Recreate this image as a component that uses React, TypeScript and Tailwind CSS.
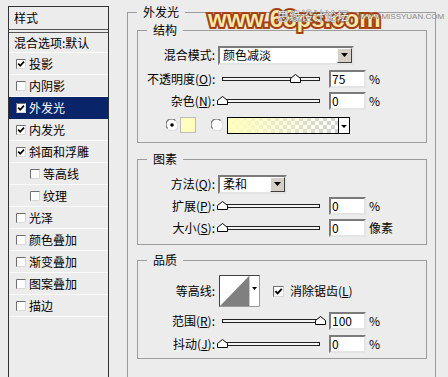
import type { ReactNode } from "react";

interface StyleItem {
  label: string;
  checked: boolean;
  indent?: boolean;
  selected?: boolean;
}

const STYLE_ITEMS: StyleItem[] = [
  { label: "投影", checked: true },
  { label: "内阴影", checked: false },
  { label: "外发光", checked: true, selected: true },
  { label: "内发光", checked: true },
  { label: "斜面和浮雕", checked: true },
  { label: "等高线", checked: false, indent: true },
  { label: "纹理", checked: false, indent: true },
  { label: "光泽", checked: false },
  { label: "颜色叠加", checked: false },
  { label: "渐变叠加", checked: false },
  { label: "图案叠加", checked: false },
  { label: "描边", checked: false },
];

function CheckBox({ checked, size = 10 }: { checked: boolean; size?: number }) {
  return (
    <svg width={size} height={size} viewBox="0 0 10 10" className="shrink-0">
      <rect x="0" y="0" width="10" height="10" fill="#fff" />
      <path d="M0.5 10V0.5H10" stroke="#6f6f6f" fill="none" />
      <path d="M9.5 0.5V9.5H0.5" stroke="#d8d8d8" fill="none" />
      {checked && (
        <path d="M2.2 4.6L4.2 6.8L8 2.6" stroke="#000" strokeWidth="1.7" fill="none" />
      )}
    </svg>
  );
}

function Radio({ on }: { on: boolean }) {
  return (
    <svg width="12" height="12" viewBox="0 0 12 12" className="shrink-0">
      <circle cx="6" cy="6" r="5.5" fill="#fff" />
      <path d="M1.6 9.5A5 5 0 0 1 9.5 1.6" stroke="#6f6f6f" strokeWidth="1.2" fill="none" />
      <path d="M10.4 2.5A5 5 0 0 1 2.5 10.4" stroke="#dcdcdc" strokeWidth="1.2" fill="none" />
      {on && <circle cx="6" cy="6" r="1.8" fill="#000" />}
    </svg>
  );
}

function Label({ children, w = "w-[68px]" }: { children: ReactNode; w?: string }) {
  return <span className={`${w} shrink-0 text-right whitespace-nowrap`}>{children}</span>;
}

function DropButton() {
  return (
    <span className="flex h-full w-[15px] items-center justify-center border border-t-white border-l-white border-r-[#404040] border-b-[#404040] bg-[#d4d0c8]">
      <svg width="7" height="4" viewBox="0 0 7 4">
        <path d="M0 0H7L3.5 4Z" fill="#000" />
      </svg>
    </span>
  );
}

function Select({ value, width }: { value: string; width: string }) {
  return (
    <div
      className={`${width} ml-[3px] flex h-[19px] items-center justify-between border-2 border-t-[#7b7b7b] border-l-[#7b7b7b] border-r-[#e4e4e4] border-b-[#e4e4e4] bg-white`}
    >
      <span className="pl-[3px] leading-none">{value}</span>
      <DropButton />
    </div>
  );
}

function Slider({ value }: { value: number }) {
  return (
    <div className="relative ml-[3px] flex h-[22px] w-[106px] shrink-0 items-center px-[4px]">
      <div className="h-[4px] w-full border border-[#222] bg-[#f4f4f4]" />
      <svg
        width="11"
        height="9"
        viewBox="0 0 11 9"
        className="absolute top-[6px]"
        style={{ left: 4 + value * 0.98 - 5.5 }}
      >
        <path d="M0.5 8.5V4.5L5.5 0.5L10.5 4.5V8.5Z" fill="#fff" stroke="#000" />
      </svg>
    </div>
  );
}

function NumberBox({ value }: { value: string }) {
  return (
    <div className="ml-[5px] flex h-[18px] w-[37px] shrink-0 items-center border-2 border-t-[#7b7b7b] border-l-[#7b7b7b] border-r-[#e4e4e4] border-b-[#e4e4e4] bg-white pl-[1px] leading-none">
      {value}
    </div>
  );
}

function SliderRow({
  label,
  value,
  unit,
  className = "",
}: {
  label: ReactNode;
  value: number;
  unit: string;
  className?: string;
}) {
  return (
    <div className={`flex h-[22px] items-center ${className}`}>
      <Label>{label}</Label>
      <Slider value={value} />
      <NumberBox value={String(value)} />
      <span className="ml-[3px]">{unit}</span>
    </div>
  );
}

function GradientSwatch() {
  return (
    <svg width="123" height="17" viewBox="0 0 123 17" className="ml-[4px]">
      <defs>
        <pattern id="chk" width="8" height="8" patternUnits="userSpaceOnUse">
          <rect width="8" height="8" fill="#fff" />
          <rect width="4" height="4" fill="#d0d0d0" />
          <rect x="4" y="4" width="4" height="4" fill="#d0d0d0" />
        </pattern>
        <linearGradient id="glow" x1="0" x2="1" y1="0" y2="0">
          <stop offset="0" stopColor="#ffffbe" stopOpacity="1" />
          <stop offset="1" stopColor="#ffffbe" stopOpacity="0" />
        </linearGradient>
      </defs>
      <rect x="1" y="1" width="110" height="15" fill="url(#chk)" />
      <rect x="1" y="1" width="110" height="15" fill="url(#glow)" />
      <rect x="111" y="1" width="11" height="15" fill="#fff" />
      <path d="M111.5 1V16" stroke="#000" />
      <path d="M114 8H120L117 11Z" fill="#000" />
      <rect x="0.5" y="0.5" width="122" height="16" fill="none" stroke="#000" />
    </svg>
  );
}

function ContourThumb() {
  return (
    <svg width="41" height="32" viewBox="0 0 41 32" className="ml-[4px] shrink-0">
      <rect x="0" y="0" width="41" height="32" fill="#fff" />
      <path d="M1 31L30 1V31Z" fill="#808080" />
      <path d="M30.5 1V31" stroke="#c8c8c8" />
      <path d="M33 12H38L35.5 15Z" fill="#000" />
      <path d="M0.5 32V0.5H41" stroke="#404040" fill="none" />
      <path d="M40.5 0.5V31.5H0.5" stroke="#9a9a9a" fill="none" />
    </svg>
  );
}

function LeftPanel() {
  return (
    <div className="ml-[8px] mt-[6px] h-[400px] w-[101px] shrink-0 border border-[#333]">
      <div className="flex h-[23px] items-center border-b border-[#555] pl-[5px]">样式</div>
      <div className="mt-[2px] border-t border-[#555]">
        <div className="flex h-[20px] items-center border-b border-[#fafafa] pl-[5px]">
          混合选项:默认
        </div>
        {STYLE_ITEMS.map((item) => (
          <div
            key={item.label}
            className={`flex h-[22px] items-center gap-[3px] border-b ${
              item.selected ? "border-[#0a246a] bg-[#0a246a] text-white" : "border-[#fafafa]"
            } ${item.indent ? "pl-[21px]" : "pl-[7px]"}`}
          >
            <CheckBox checked={item.checked} />
            <span>{item.label}</span>
          </div>
        ))}
      </div>
    </div>
  );
}

export default function App() {
  return (
    <div className="relative flex h-[377px] w-[448px] overflow-hidden bg-[#ececec] font-['Noto_Sans_CJK_SC',sans-serif] text-[12px] leading-[16px] text-black">
      <LeftPanel />

      <fieldset className="ml-[18px] mt-[4px] h-[390px] w-[309px] shrink-0 border border-[#9c9c9c] pl-[9px] pr-[8px] pt-[2px]">
        <legend className="px-[6px] leading-[16px]">外发光</legend>

        <fieldset className="border border-[#9c9c9c] pb-[6px] pl-[9px] pt-[6px]">
          <legend className="px-[6px] leading-[16px]">结构</legend>
          <div className="flex h-[22px] items-center">
            <Label>混合模式:</Label>
            <Select value="颜色减淡" width="w-[136px]" />
          </div>
          <SliderRow
            className="mt-[2px]"
            label={
              <>
                不透明度(<u>O</u>):
              </>
            }
            value={75}
            unit="%"
          />
          <SliderRow
            label={
              <>
                杂色(<u>N</u>):
              </>
            }
            value={0}
            unit="%"
          />
          <div className="mt-[2px] flex h-[22px] items-center pl-[19px]">
            <Radio on />
            <span className="ml-[2px] h-[16px] w-[16px] border border-[#bcbcbc] bg-[#ffffbe]" />
            <span className="ml-[15px]">
              <Radio on={false} />
            </span>
            <GradientSwatch />
          </div>
        </fieldset>

        <fieldset className="mt-[8px] border border-[#9c9c9c] pb-[5px] pl-[9px] pt-[6px]">
          <legend className="px-[6px] leading-[16px]">图素</legend>
          <div className="flex h-[22px] items-center">
            <Label>
              方法(<u>Q</u>):
            </Label>
            <Select value="柔和" width="w-[69px]" />
          </div>
          <SliderRow
            label={
              <>
                扩展(<u>P</u>):
              </>
            }
            value={0}
            unit="%"
          />
          <SliderRow
            label={
              <>
                大小(<u>S</u>):
              </>
            }
            value={0}
            unit="像素"
          />
        </fieldset>

        <fieldset className="mt-[7px] border border-[#9c9c9c] pb-[3px] pl-[9px] pt-[7px]">
          <legend className="px-[6px] leading-[16px]">品质</legend>
          <div className="flex h-[32px] items-center">
            <Label>等高线:</Label>
            <ContourThumb />
            <span className="ml-[13px]">
              <CheckBox checked size={11} />
            </span>
            <span className="ml-[6px]">
              消除锯齿(<u>L</u>)
            </span>
          </div>
          <SliderRow
            className="mt-[3px]"
            label={
              <>
                范围(<u>R</u>):
              </>
            }
            value={100}
            unit="%"
          />
          <SliderRow
            className="mt-[1px]"
            label={
              <>
                抖动(<u>J</u>):
              </>
            }
            value={0}
            unit="%"
          />
        </fieldset>
      </fieldset>

      <div className="pointer-events-none absolute left-[208px] top-[5px] flex items-center">
        <span className="font-['Liberation_Sans',sans-serif] text-[24px] font-bold leading-[28px] text-[#fde6a6] [-webkit-text-stroke:4px_#b04818] [paint-order:stroke_fill] [text-shadow:0_0_2px_#5b1a08]">
          www.68ps.com
        </span>
      </div>
      <span className="pointer-events-none absolute left-[277px] top-[9px] text-[12px] leading-[14px] text-[#ececec] [-webkit-text-stroke:0.6px_#555] [paint-order:stroke_fill]">
        思缘设计论坛
      </span>
      <span className="pointer-events-none absolute left-[357px] top-[12px] font-['Liberation_Sans',sans-serif] text-[8px] leading-[10px] text-[#8a8a8a]">
        WWW.MISSYUAN.COM
      </span>
    </div>
  );
}
